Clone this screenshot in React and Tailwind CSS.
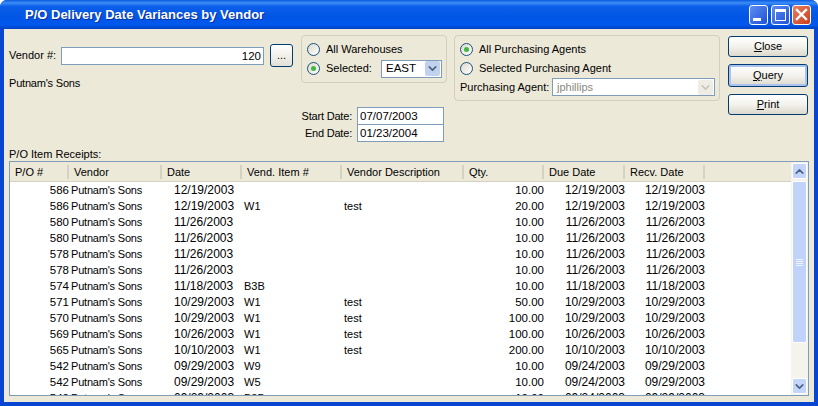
import { ChevronDown, ChevronUp } from 'lucide-react';

const rows = [
  ['586', '12/19/2003', '', '', '10.00', '12/19/2003', '12/19/2003'],
  ['586', '12/19/2003', 'W1', 'test', '20.00', '12/19/2003', '12/19/2003'],
  ['580', '11/26/2003', '', '', '10.00', '11/26/2003', '11/26/2003'],
  ['580', '11/26/2003', '', '', '10.00', '11/26/2003', '11/26/2003'],
  ['578', '11/26/2003', '', '', '10.00', '11/26/2003', '11/26/2003'],
  ['578', '11/26/2003', '', '', '10.00', '11/26/2003', '11/26/2003'],
  ['574', '11/18/2003', 'B3B', '', '10.00', '11/18/2003', '11/18/2003'],
  ['571', '10/29/2003', 'W1', 'test', '50.00', '10/29/2003', '10/29/2003'],
  ['570', '10/29/2003', 'W1', 'test', '100.00', '10/29/2003', '10/29/2003'],
  ['569', '10/26/2003', 'W1', 'test', '100.00', '10/26/2003', '10/26/2003'],
  ['565', '10/10/2003', 'W1', 'test', '200.00', '10/10/2003', '10/10/2003'],
  ['542', '09/29/2003', 'W9', '', '10.00', '09/24/2003', '09/29/2003'],
  ['542', '09/29/2003', 'W5', '', '10.00', '09/24/2003', '09/29/2003'],
  ['540', '09/29/2003', 'B3B', '', '10.00', '09/24/2003', '09/29/2003'],
];

const headers = [
  ['P/O #', 'w-[59px]'],
  ['Vendor', 'w-[93px]'],
  ['Date', 'w-[80px]'],
  ['Vend. Item #', 'w-[100px]'],
  ['Vendor Description', 'w-[122px]'],
  ['Qty.', 'w-[80px]'],
  ['Due Date', 'w-[81px]'],
  ['Recv. Date', 'w-[80px]'],
];

function Radio({ checked, label }) {
  return (
    <label className="flex items-center gap-[6px] h-[19px] whitespace-nowrap">
      <span className="w-[13px] h-[13px] rounded-full border border-[#1c5180] bg-gradient-to-br from-[#dcd9ce] to-white flex items-center justify-center shrink-0">
        {checked && <span className="w-[5px] h-[5px] rounded-full bg-[#3fb93f]" />}
      </span>
      <span>{label}</span>
    </label>
  );
}

function Combo({ value, disabled, className }) {
  return (
    <div className={`flex items-center justify-between border border-[#7f9db9] bg-white pl-[4px] pr-px ${className} ${disabled ? 'text-[#8a8a80]' : ''}`}>
      <span>{value}</span>
      <span className={`w-[15px] h-[15px] rounded-[2px] flex items-center justify-center ${disabled ? 'bg-[#eeede5] text-[#c9c7ba]' : 'bg-[#c1d2ee] text-[#4d6185]'}`}>
        <ChevronDown size={13} strokeWidth={3} />
      </span>
    </div>
  );
}

function Button({ first, rest, isDefault, className }) {
  return (
    <button className={`w-[80px] rounded-[3px] border border-[#003c74] bg-gradient-to-b from-white via-[#f3f2ec] to-[#dcd8cc] text-center text-black ${isDefault ? 'shadow-[inset_0_0_0_2px_#a9c2ee]' : ''} ${className}`}>
      <span className="underline">{first}</span>{rest}
    </button>
  );
}

function DateRow({ label, value }) {
  return (
    <div className="flex items-center -mt-px first:mt-0">
      <span className="w-[51px] text-right whitespace-nowrap tracking-[-0.2px]">{label}</span>
      <span className="ml-[5px] w-[87px] h-[18px] border border-[#7f9db9] bg-white pl-[2px] leading-[16px] text-[11.5px]">{value}</span>
    </div>
  );
}

export default function App() {
  return (
    <div className="w-[818px] h-[406px] rounded-t-[7px] overflow-hidden flex flex-col bg-[#0845d0] text-black text-[11px] font-['Liberation_Sans',sans-serif]">
      {/* Title bar */}
      <div className="h-[29px] shrink-0 flex items-center pl-[25px] pr-[7px] bg-[linear-gradient(to_bottom,#0a5be0_0%,#3c8cf8_10%,#0c5fe8_22%,#0055e5_60%,#0058ee_85%,#0043c4_100%)]">
        <span className="flex-1 text-white font-bold text-[13px] [text-shadow:1px_1px_#0a2f9c]">P/O Delivery Date Variances by Vendor</span>
        <div className="flex gap-[2px]">
          <span className="w-[19px] h-[20px] mr-px rounded-[3px] border border-white bg-gradient-to-br from-[#5f8df0] to-[#1f50d8] flex items-end p-[3px]">
            <span className="w-[8px] h-[3px] bg-white" />
          </span>
          <span className="w-[19px] h-[20px] rounded-[3px] border border-white bg-gradient-to-br from-[#5f8df0] to-[#1f50d8] p-[3px]">
            <span className="block w-full h-full border border-t-[3px] border-white" />
          </span>
          <span className="w-[19px] h-[20px] rounded-[3px] border border-white bg-gradient-to-br from-[#e8805f] to-[#c93a18] flex items-center justify-center">
            <svg width="13" height="13" viewBox="0 0 13 13" stroke="white" strokeWidth="2.4" strokeLinecap="square">
              <path d="M2 2l9 9M11 2l-9 9" />
            </svg>
          </span>
        </div>
      </div>

      {/* Client area */}
      <div className="mx-[4px] mb-[4px] flex-1 min-h-0 bg-[#ece9d8] px-[5px] flex flex-col">
        <div className="flex items-start h-[119px] shrink-0">
          <div className="w-[284px] mt-[15px]">
            <div className="flex items-center h-[23px]">
              <span className="w-[52px]">Vendor #:</span>
              <div className="w-[203px] h-[18px] border border-[#7f9db9] bg-white text-right pr-[2px] leading-[16px] text-[11.5px]">120</div>
              <button className="ml-[6px] w-[23px] h-[23px] rounded-[3px] border border-[#003c74] bg-gradient-to-b from-white to-[#e3e0d5] leading-none">...</button>
            </div>
            <div className="mt-[8px] tracking-[-0.2px]">Putnam's Sons</div>
          </div>

          <div className="ml-[8px] w-[146px] mt-[6px]">
            <div className="h-[48px] rounded-[4px] border border-[#d0d0bf] pl-[5px] pr-[4px] pt-[4px]">
              <Radio label="All Warehouses" />
              <div className="flex items-center justify-between">
                <Radio checked label="Selected:" />
                <Combo value="EAST" className="w-[61px] h-[18px] text-[11.5px]" />
              </div>
            </div>
            <div className="mt-[24px]">
              <DateRow label="Start Date:" value="07/07/2003" />
              <DateRow label="End Date:" value="01/23/2004" />
            </div>
          </div>

          <div className="ml-[7px] w-[266px] h-[66px] mt-[6px] rounded-[4px] border border-[#d0d0bf] pl-[5px] pr-[4px] pt-[4px]">
            <Radio checked label="All Purchasing Agents" />
            <Radio label="Selected Purchasing Agent" />
            <div className="flex items-center">
              <span className="w-[92px] whitespace-nowrap">Purchasing Agent:</span>
              <Combo disabled value="jphillips" className="w-[163px] h-[18px]" />
            </div>
          </div>

          <div className="ml-[8px] mt-[7px] flex flex-col">
            <Button first="C" rest="lose" className="h-[21px]" />
            <Button first="Q" rest="uery" isDefault className="h-[23px] mt-[7px]" />
            <Button first="P" rest="rint" className="h-[21px] mt-[7px]" />
          </div>
        </div>

        <div className="h-[13px] leading-[13px] shrink-0">P/O Item Receipts:</div>

        {/* List */}
        <div className="w-[800px] h-[235px] border border-[#7f9db9] bg-white flex overflow-hidden">
          <div className="w-[782px] flex flex-col">
            <div className="h-[20px] shrink-0 flex items-center bg-[#ece9d8] border-b border-[#d6d2c2]">
              {headers.map(([name, width]) => (
                <div key={name} className={`${width} h-[14px] pl-[5px] leading-[14px] border-r-2 border-[#d6d2c2] whitespace-nowrap`}>{name}</div>
              ))}
            </div>
            <div className="flex-1 overflow-hidden">
              {rows.map((r, i) => (
                <div key={i} className="h-[16px] leading-[16px] flex whitespace-nowrap text-[12px]">
                  <span className="w-[59px] text-right text-[11.5px]">{r[0]}</span>
                  <span className="w-[103px] pl-[2px] text-[11px] tracking-[-0.2px]">Putnam's Sons</span>
                  <span className="w-[70px] pl-[2px]">{r[1]}</span>
                  <span className="w-[100px] pl-[2px] text-[11px]">{r[2]}</span>
                  <span className="w-[120px] pl-[2px] text-[11px]">{r[3]}</span>
                  <span className="w-[82px] text-right text-[11.5px]">{r[4]}</span>
                  <span className="w-[81px] text-right">{r[5]}</span>
                  <span className="w-[80px] text-right">{r[6]}</span>
                </div>
              ))}
            </div>
          </div>

          {/* Scrollbar */}
          <div className="w-[17px] flex flex-col bg-[#f5f4ec] pt-px">
            <span className="h-[16px] mx-px rounded-[2px] bg-[#c4d5fb] border border-white flex items-center justify-center text-[#4d6185]">
              <ChevronUp size={13} strokeWidth={3} />
            </span>
            <span className="h-[162px] mt-[2px] mx-px rounded-[2px] bg-[#c1d3fb] border border-white flex flex-col items-center justify-center gap-px">
              <span className="w-[7px] h-px bg-[#eef3fe]" />
              <span className="w-[7px] h-px bg-[#eef3fe]" />
              <span className="w-[7px] h-px bg-[#eef3fe]" />
              <span className="w-[7px] h-px bg-[#eef3fe]" />
            </span>
            <span className="flex-1" />
            <span className="h-[16px] mx-px mb-px rounded-[2px] bg-[#c4d5fb] border border-white flex items-center justify-center text-[#4d6185]">
              <ChevronDown size={13} strokeWidth={3} />
            </span>
          </div>
        </div>
      </div>
    </div>
  );
}
